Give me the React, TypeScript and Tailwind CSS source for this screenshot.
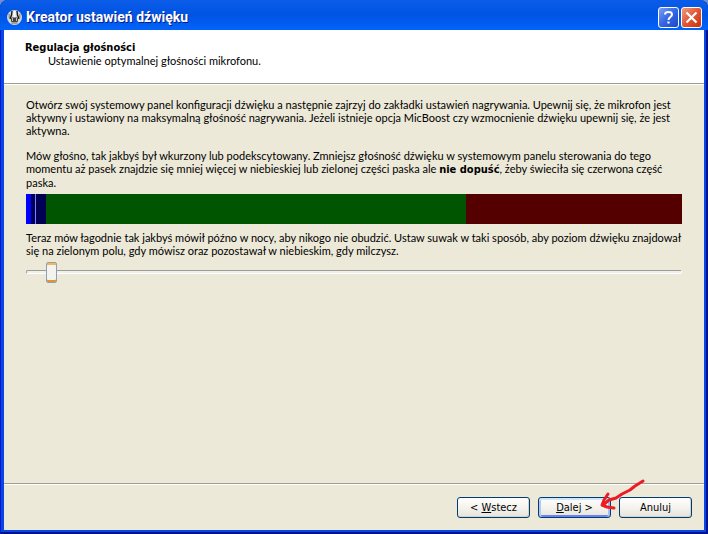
import type { ReactNode } from 'react';

const METER_ZONES = [
  { id: 'level', className: 'w-[5px] bg-[#0000ff]' },
  { id: 'quiet', className: 'w-1 bg-[#000055]' },
  { id: 'threshold', className: 'w-px bg-[#8080ff]' },
  { id: 'silence', className: 'w-2.5 bg-[#000055]' },
  { id: 'speech', className: 'grow-[420] basis-0 bg-[#005500]' },
  { id: 'clipping', className: 'grow-[216] basis-0 bg-[#550000]' },
];

function CaptionButton({ label, className, children }: { label: string; className: string; children: ReactNode }) {
  return (
    <button
      type="button"
      aria-label={label}
      className={`flex size-[21px] items-center justify-center rounded-[3px] border border-white ${className}`}
    >
      <svg viewBox="0 0 19 19" className="size-[19px]" fill="none" stroke="#fff" aria-hidden="true">
        {children}
      </svg>
    </button>
  );
}

function WizardButton({ primary = false, children }: { primary?: boolean; children: ReactNode }) {
  return (
    <button
      type="button"
      className={`h-[21px] w-[73px] rounded-[3px] border border-[#003c74] bg-linear-to-b from-white via-[#f4f3ee] to-[#e6e3db] font-['DejaVu_Sans_Condensed',sans-serif] ${
        primary
          ? 'shadow-[inset_0_2px_0_#cee7ff,inset_2px_0_0_#b0c8f4,inset_-2px_0_0_#a4bdee,inset_0_-2px_0_#6982ee]'
          : 'shadow-[inset_-1px_-1px_0_#d6d0c5]'
      }`}
    >
      {children}
    </button>
  );
}

function Separator() {
  return <div className="h-0.5 border-t border-[#9d9d92] bg-white" />;
}

// Red pen stroke pointing at the next button
function PenArrow() {
  return (
    <svg
      viewBox="0 0 46 34"
      className="pointer-events-none absolute -top-[18px] left-[61px] h-[34px] w-[46px]"
      fill="none"
      stroke="#ed1c24"
      strokeWidth="3"
      strokeLinecap="round"
      strokeLinejoin="round"
      aria-hidden="true"
    >
      <path d="M44 2 L36 7 L31 11 L23 15 L17 19 L10 21 L4 26" />
      <path d="M9 15 L5 21 L3 26 L8 28 L15 29" />
    </svg>
  );
}

export default function App() {
  return (
    <div className="min-h-screen bg-[#6f8fd0] font-['Lato',sans-serif] text-[11px] leading-[13px] text-black">
      <div className="flex min-h-screen flex-col rounded-t-lg bg-[#0a46e4] px-1 pb-1 shadow-[inset_1px_0_0_#0019cf,inset_-2px_-2px_0_#00138c]">
        <header className="-mx-1 flex h-[30px] items-center gap-1 rounded-t-lg bg-linear-to-b from-[#0b5ce8] via-[#0054e3] to-[#0063fb] pt-1 pr-1.5 pl-[7px]">
          <svg viewBox="0 0 15 15" className="size-[15px]" aria-hidden="true">
            <circle cx="7.5" cy="7.5" r="7.5" fill="#d4d8dc" />
            <path d="M5 1 L4.5 5 L3 9 M10 1 L10.5 5 L12 9" fill="none" stroke="#1a1a1a" strokeWidth="1.4" />
            <path d="M2.2 4 V8 M12.8 4 V8" fill="none" stroke="#777" />
            <path d="M7.5 1 V7" stroke="#fff" strokeWidth="2" />
            <rect x="4" y="7.5" width="7" height="4.5" rx="1" fill="#444" />
            <path d="M5.5 8 V11 M9.5 8 V11" stroke="#bbb" />
            <path d="M4.5 13 H10.5" stroke="#666" />
          </svg>
          <h1 className="grow font-['Roboto',sans-serif] text-[14px] font-bold text-white [text-shadow:1px_1px_0_#0a1883]">
            Kreator ustawień dźwięku
          </h1>
          <div className="flex gap-0.5">
            <CaptionButton label="Pomoc" className="bg-linear-to-br from-[#7c9ef5] via-[#3566e4] to-[#1d48c8]">
              <path d="M6 6.5 C6 3.2 13 3.2 13 6.5 C13 9 9.5 9 9.5 12" strokeWidth="2" />
              <path d="M9.5 13.5 V15.5" strokeWidth="2.2" />
            </CaptionButton>
            <CaptionButton label="Zamknij" className="bg-linear-to-br from-[#f09a80] via-[#e05530] to-[#c8330c]">
              <path d="M4.5 4.5 L14.5 14.5 M14.5 4.5 L4.5 14.5" strokeWidth="2.2" />
            </CaptionButton>
          </div>
        </header>

        <section className="h-[53px] bg-white px-[21px] pt-[11px]">
          <h2 className="font-['DejaVu_Sans_Condensed',sans-serif] font-bold">Regulacja głośności</h2>
          <p className="pl-[23px]">Ustawienie optymalnej głośności mikrofonu.</p>
        </section>
        <Separator />

        <main className="grow bg-[#ece9d8] px-[22px] pt-[13px]">
          <p>
            Otwórz swój systemowy panel konfiguracji dźwięku a następnie zajrzyj do zakładki ustawień nagrywania. Upewnij się, że mikrofon jest
            <br />
            aktywny i ustawiony na maksymalną głośność nagrywania. Jeżeli istnieje opcja MicBoost czy wzmocnienie dźwięku upewnij się, że jest
            <br />
            aktywna.
          </p>
          <p className="mt-3">
            Mów głośno, tak jakbyś był wkurzony lub podekscytowany. Zmniejsz głośność dźwięku w systemowym panelu sterowania do tego
            <br />
            momentu aż pasek znajdzie się mniej więcej w niebieskiej lub zielonej części paska ale{' '}
            <b className="font-['DejaVu_Sans_Condensed',sans-serif]">nie dopuść</b>, żeby świeciła się czerwona część
            <br />
            paska.
          </p>
          <div role="img" aria-label="Poziom dźwięku" className="mt-[5px] flex h-[30px]">
            {METER_ZONES.map((zone) => (
              <span key={zone.id} className={zone.className} />
            ))}
          </div>
          <label htmlFor="threshold" className="mt-[7px] block">
            Teraz mów łagodnie tak jakbyś mówił późno w nocy, aby nikogo nie obudzić. Ustaw suwak w taki sposób, aby poziom dźwięku znajdował
            <br />
            się na zielonym polu, gdy mówisz oraz pozostawał w niebieskim, gdy milczysz.
          </label>
          <input
            id="threshold"
            type="range"
            min={0}
            max={100}
            defaultValue={3}
            className="mt-1 block h-[22px] w-full appearance-none bg-transparent [&::-webkit-slider-runnable-track]:h-1 [&::-webkit-slider-runnable-track]:rounded-xs [&::-webkit-slider-runnable-track]:border [&::-webkit-slider-runnable-track]:border-t-[#9d9c99] [&::-webkit-slider-runnable-track]:border-r-white [&::-webkit-slider-runnable-track]:border-b-white [&::-webkit-slider-runnable-track]:border-l-[#9d9c99] [&::-webkit-slider-runnable-track]:bg-[#f0f0ea] [&::-webkit-slider-thumb]:-mt-[9px] [&::-webkit-slider-thumb]:h-[21px] [&::-webkit-slider-thumb]:w-[11px] [&::-webkit-slider-thumb]:appearance-none [&::-webkit-slider-thumb]:rounded-[2px] [&::-webkit-slider-thumb]:border [&::-webkit-slider-thumb]:border-[#8ea0b4] [&::-webkit-slider-thumb]:bg-[#f3f3ef] [&::-webkit-slider-thumb]:shadow-[inset_0_2px_0_#f8b64b,inset_0_-2px_0_#e0972a]"
          />
        </main>

        <footer className="bg-[#ece9d8]">
          <Separator />
          <div className="flex justify-end gap-2 p-3">
            <WizardButton>
              &lt; <u>W</u>stecz
            </WizardButton>
            <div className="relative">
              <WizardButton primary>
                <u>D</u>alej &gt;
              </WizardButton>
              <PenArrow />
            </div>
            <WizardButton>Anuluj</WizardButton>
          </div>
        </footer>
      </div>
    </div>
  );
}
